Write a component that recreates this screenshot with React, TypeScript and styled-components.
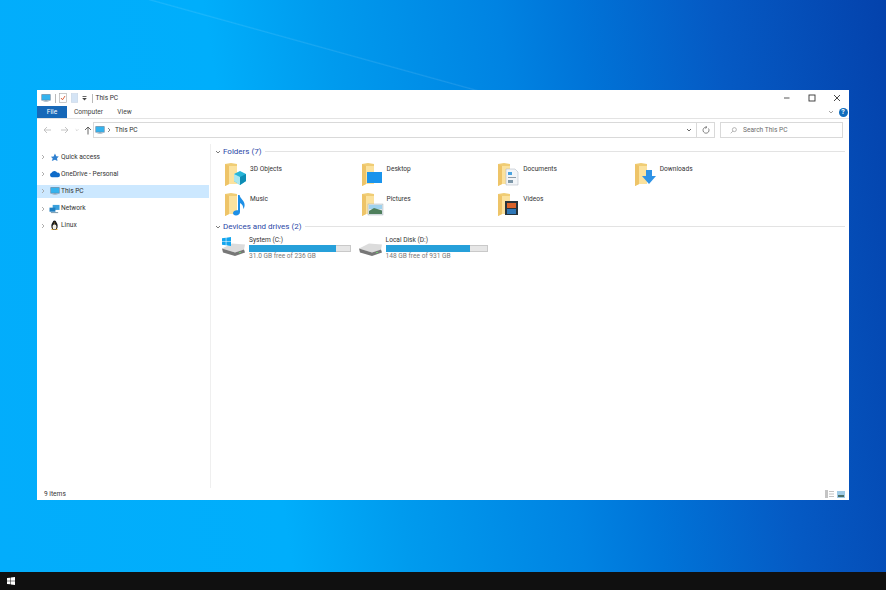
import React from 'react';
import styled, { createGlobalStyle } from 'styled-components';

const GlobalStyle = createGlobalStyle`
  html, body { margin: 0; padding: 0; width: 886px; height: 590px; overflow: hidden; }
  body { font-family: Roboto, "Open Sans", "Liberation Sans", sans-serif; }
  * { box-sizing: border-box; }
`;

const Screen = styled.div`
  width: 886px;
  height: 590px;
  display: flex;
  flex-direction: column;
`;

const Desktop = styled.div`
  height: 572px;
  padding: 90px 37px 72px;
  background:
    linear-gradient(15.5deg, rgba(255, 255, 255, 0) 57.1%, rgba(255, 255, 255, 0.1) 57.6%, rgba(255, 255, 255, 0) 58.2%) 0 0 / 500px 90px no-repeat,
    linear-gradient(81deg, #03adfb 0%, #00aefb 30%, #009bee 42%, #0083e2 60%, #0074d8 68%, #055ac4 82%, #0442ac 100%);
`;

const Window = styled.div`
  width: 812px;
  height: 410px;
  background: #fff;
  display: flex;
  flex-direction: column;
  color: #333;
  font-size: 6.6px;
  line-height: 1;
`;

const TitleBar = styled.div`
  height: 16px;
  display: flex;
  align-items: center;
  padding-left: 4px;
  flex: none;
`;

const QuickBar = styled.div`
  display: flex;
  align-items: center;
  gap: 3.5px;
`;

const Sep = styled.span`
  width: 1px;
  height: 9px;
  background: #b9b9b9;
`;

const TitleText = styled.span`
  margin-left: 3px;
  flex: 1;
`;

const WinButtons = styled.div`
  display: flex;
  align-items: center;
  gap: 15px;
  padding-right: 7px;
`;

const WinBtn = styled.span`
  width: 10px;
  height: 10px;
  display: flex;
  align-items: center;
  justify-content: center;
`;

const RibbonTabs = styled.div`
  height: 13px;
  display: flex;
  align-items: stretch;
  flex: none;
  border-bottom: 1px solid #e3e3e3;
  padding-right: 1.5px;
`;

const FileTab = styled.span`
  width: 30px;
  background: #1668b8;
  color: #fff;
  display: flex;
  align-items: center;
  justify-content: center;
`;

const Tab = styled.span<{ $w: number }>`
  width: ${(p) => p.$w}px;
  display: flex;
  align-items: center;
  justify-content: center;
  color: #444;
`;

const RibbonRight = styled.div`
  margin-left: auto;
  display: flex;
  align-items: center;
  gap: 4.5px;
`;

const Help = styled.span`
  width: 9px;
  height: 9px;
  border-radius: 50%;
  background: #0f6cbd;
  color: #fff;
  font-size: 7px;
  font-weight: 700;
  display: flex;
  align-items: center;
  justify-content: center;
`;

const AddressRow = styled.div`
  height: 21px;
  flex: none;
  display: flex;
  align-items: center;
  padding: 2px 6px 1px 5px;
`;

const NavButtons = styled.div`
  width: 51px;
  padding-left: 1px;
  display: flex;
  align-items: center;
  gap: 5px;
  flex: none;

  svg:nth-child(2) {
    margin: 0 1px 0 2.5px;
  }
`;

const AddressBox = styled.div`
  width: 604px;
  height: 16px;
  border: 1px solid #d9d9d9;
  display: flex;
  align-items: center;
  padding-left: 1px;
  gap: 1px;
`;

const Crumb = styled.span`
  margin-left: 2px;
  flex: 1;
`;

const DropArrow = styled.span`
  display: flex;
  margin-right: 4px;
`;

const RefreshBox = styled.div`
  width: 18px;
  height: 16px;
  border: 1px solid #d9d9d9;
  border-left: none;
  display: flex;
  align-items: center;
  justify-content: center;
  margin-right: 5px;
`;

const SearchBox = styled.div`
  width: 123px;
  height: 16px;
  border: 1px solid #d9d9d9;
  display: flex;
  align-items: center;
  gap: 6px;
  padding-left: 9px;
  color: #6d6d6d;
`;

const Body = styled.div`
  flex: 1;
  display: flex;
  min-height: 0;
  padding-top: 4px;
`;

const Sidebar = styled.nav`
  width: 174px;
  flex: none;
  border-right: 1px solid #efefef;
  padding-top: 6.5px;
  display: flex;
  flex-direction: column;
  gap: 4.2px;
`;

const NavRow = styled.div<{ $active?: boolean }>`
  height: 13px;
  width: 172px;
  display: flex;
  align-items: center;
  padding-left: 3px;
  background: ${(p) => (p.$active ? '#cce8ff' : 'transparent')};
`;

const NavIcon = styled.span`
  width: 11px;
  height: 11px;
  margin: 0 1px 0 3px;
  display: flex;
  align-items: center;
  justify-content: center;
`;

const Content = styled.main`
  flex: 1;
  padding: 2px 4px 0 4px;
`;

const GroupHeader = styled.div`
  display: flex;
  align-items: center;
  height: 11px;
  color: #2a47a6;
  font-size: 8px;
  gap: 2px;
`;

const GroupLine = styled.span`
  flex: 1;
  height: 1px;
  background: #e3e3e3;
  margin-left: 2px;
`;

const FolderGrid = styled.div`
  display: grid;
  grid-template-columns: repeat(4, 136.6px);
  grid-auto-rows: 30px;
  padding: 5px 0 0 8px;
  margin-bottom: -1px;
`;

const FolderItem = styled.div`
  display: flex;
  align-items: flex-start;
  gap: 3px;
`;

const FolderName = styled.span`
  padding-top: 3.5px;
`;

const DriveGrid = styled.div`
  display: grid;
  grid-template-columns: repeat(2, 136.6px);
  padding: 5px 0 0 6px;
`;

const DriveItem = styled.div`
  display: flex;
  align-items: flex-start;
`;

const DriveInfo = styled.div`
  margin-left: 3px;
  width: 102px;
  display: flex;
  flex-direction: column;
  gap: 1.2px;
`;

const Bar = styled.div`
  height: 7px;
  background: #e6e6e6;
  border: 1px solid #c9c9c9;
`;

const BarFill = styled.div`
  height: 100%;
  background: #26a0da;
  margin: -1px 0 0 -1px;
  padding-bottom: 2px;
  box-sizing: content-box;
`;

const DriveSize = styled.span`
  color: #777;
`;

const StatusBar = styled.div`
  height: 12px;
  flex: none;
  display: flex;
  align-items: center;
  justify-content: space-between;
  padding: 0 4px 0 7px;
  color: #333;
`;

const ViewIcons = styled.div`
  display: flex;
  gap: 3px;
  align-items: center;
`;

const Taskbar = styled.div`
  height: 18px;
  flex: none;
  background: #101010;
  display: flex;
  align-items: center;
  padding-left: 7px;
`;

const Chevron = ({ color = '#a6a6a6' }: { color?: string }) => (
  <svg width="6" height="6" viewBox="0 0 6 6" fill="none" stroke={color} strokeWidth="0.9"><path d="M2 1l2 2-2 2" /></svg>
);

const ChevronDown = ({ color = '#6d6d6d' }: { color?: string }) => (
  <svg width="6" height="6" viewBox="0 0 6 6" fill="none" stroke={color} strokeWidth="0.9"><path d="M1 2l2 2 2-2" /></svg>
);

const Monitor = ({ size = 10 }: { size?: number }) => (
  <svg width={size} height={size} viewBox="0 0 12 12">
    <rect x="0.5" y="1.5" width="11" height="7.5" fill="#5a7f9c" />
    <rect x="1.2" y="2.2" width="9.6" height="6" fill="#35b3ee" />
    <rect x="4.5" y="9" width="3" height="1" fill="#7f98aa" />
    <rect x="3" y="10" width="6" height="0.8" fill="#a9bac6" />
  </svg>
);

const WinLogo = ({ size, color }: { size: number; color: string }) => (
  <svg width={size} height={size} viewBox="0 0 10 10" fill={color}>
    <path d="M0 1.4l4.2-.6v3.9H0zM4.8.7L10 0v4.7H4.8zM0 5.3h4.2v3.9L0 8.6zM4.8 5.3H10V10l-5.2-.7z" />
  </svg>
);

// overlay drawn over the folder differs per library folder
const overlays: Record<string, React.ReactNode> = {
  '3D Objects': (
    <>
      <path d="M11 12l6-3 6 3v7l-6 4-6-4z" fill="#27b5d8" />
      <path d="M11 12l6 3v8l-6-4z" fill="#a9e6ef" />
      <path d="M17 15l6-3v7l-6 4z" fill="#0e8db5" />
    </>
  ),
  Desktop: <rect x="7" y="10" width="15" height="11" fill="#1a94ec" />,
  Documents: (
    <>
      <path d="M10 7h9l3 3v13H10z" fill="#f2f5f8" stroke="#a8b3bd" strokeWidth="0.5" />
      <rect x="12" y="10" width="4" height="3" fill="#4aa3e0" />
      <rect x="12" y="15" width="8" height="1" fill="#8f9ca8" />
      <rect x="12" y="18" width="5" height="3" fill="#7d97a8" />
    </>
  ),
  Downloads: <path d="M13 8h6v6h4l-7 8-7-8h4z" fill="#2f93e6" />,
  Music: (
    <path d="M15 3h1.6c.4 4 5 5 5 10 0 1.500-.5 3-1.300 4 .2-3-1.300-5-3.300-6v9c0 2-2 3.500-4 3.500s-3-1-3-2.400c0-2 2.500-3.300 5-2.800z" fill="#1d8fe6" />
  ),
  Pictures: (
    <>
      <rect x="8" y="12" width="15" height="11" fill="#dfe6ea" stroke="#9aa7af" strokeWidth="0.4" />
      <rect x="9" y="13" width="13" height="4" fill="#9fd2ee" />
      <path d="M9 19l5-3 8 2.500V22H9z" fill="#4e7f5c" />
    </>
  ),
  Videos: (
    <>
      <rect x="9" y="9" width="13" height="14" fill="#26333c" />
      <rect x="11" y="11" width="9" height="5" fill="#d9622b" />
      <rect x="11" y="17" width="9" height="5" fill="#2e77b8" />
    </>
  ),
};

const FolderIcon = ({ name }: { name: string }) => (
  <svg width="24" height="24" viewBox="0 0 24 24">
    <path d="M2 2l6-1 6 1v20H6l-4 2z" fill="#f0cd75" />
    <path d="M2 2l4 2v18l-4 2z" fill="#eec468" />
    <path d="M6 4h8v18H6z" fill="#fbe29e" />
    {overlays[name]}
  </svg>
);

const DriveIcon = ({ system }: { system?: boolean }) => (
  <svg width="25" height="20" viewBox="0 0 25 20">
    <g transform="translate(1 6.5)">
      <path d="M0 5l10-5 13 1-1 5-9 3z" fill="#dcdcdc" />
      <path d="M0 5l13 4 9-3 1 3-10 3.500L1 9z" fill="#777" />
      <rect x="17" y="8.500" width="2" height="0.800" fill="#6fdc6f" />
    </g>
    {system && <g transform="translate(1 0)"><WinLogo size={9} color="#12a5ee" /></g>}
  </svg>
);

const folders = ['3D Objects', 'Desktop', 'Documents', 'Downloads', 'Music', 'Pictures', 'Videos'];

const drives = [
  { name: 'System (C:)', size: '31.0 GB free of 236 GB', used: 86.500, system: true },
  { name: 'Local Disk (D:)', size: '148 GB free of 931 GB', used: 84 },
];

const navItems: { label: string; icon: React.ReactNode; active?: boolean }[] = [
  {
    label: 'Quick access',
    icon: (
      <svg width="9" height="9" viewBox="0 0 10 10"><path d="M5.500.5l1.500 3 2.800.4-2 2 .5 3.100-2.800-1.500L2 9l1-3-2-1.800L4 3.900z" fill="#2f80d0" /></svg>
    ),
  },
  {
    label: 'OneDrive - Personal',
    icon: (
      <svg width="11" height="8" viewBox="0 0 12 8"><path d="M3 7.500A2.500 2.500 0 0 1 2.800 2.700 3.500 3.500 0 0 1 9 2.500 2.500 2.500 0 0 1 9.800 7.500z" fill="#0f6cc9" /></svg>
    ),
  },
  { label: 'This PC', icon: <Monitor />, active: true },
  {
    label: 'Network',
    icon: (
      <svg width="11" height="10" viewBox="0 0 12 11">
        <rect x="4" y="1" width="7.500" height="5.500" fill="#3aa0dc" />
        <rect x="0.500" y="4" width="6.500" height="4.500" fill="#1f7fc0" />
        <rect x="2" y="9" width="8" height="1" fill="#6d8fa5" />
      </svg>
    ),
  },
  {
    label: 'Linux',
    icon: (
      <svg width="9" height="11" viewBox="0 0 10 12">
        <ellipse cx="5" cy="6.500" rx="3.500" ry="4.500" fill="#1d1d1d" />
        <ellipse cx="5" cy="7.500" rx="2.200" ry="3" fill="#f4f0e4" />
        <circle cx="5" cy="2.500" r="2" fill="#1d1d1d" />
        <path d="M1 11l2-1.500 1 1.500zM9 11L7 9.500 6 11z" fill="#e8a51c" />
        <path d="M4.200 3h1.600L5 4z" fill="#e8a51c" />
      </svg>
    ),
  },
];

export default function App() {
  return (
    <Screen>
      <GlobalStyle />
      <Desktop>
        <Window>
          <TitleBar>
            <QuickBar>
              <Monitor />
              <Sep />
              <svg width="8" height="10" viewBox="0 0 8 10">
                <rect x="0.500" y="0.500" width="7" height="9" fill="#fff" stroke="#a7a7a7" strokeWidth="0.6" />
                <path d="M2 5l1.500 1.800L6 3" stroke="#d8552c" strokeWidth="0.9" fill="none" />
              </svg>
              <svg width="7" height="10" viewBox="0 0 7 10"><rect x="0.250" y="0.500" width="6.500" height="9" fill="#d5e4f5" stroke="#c3d2e2" strokeWidth="0.5" /></svg>
              <svg width="7" height="7" viewBox="0 0 7 7">
                <rect x="1.500" y="1" width="4" height="0.800" fill="#444" />
                <path d="M1.200 3h4.600L3.500 5.500z" fill="#444" />
              </svg>
              <Sep />
            </QuickBar>
            <TitleText>This PC</TitleText>
            <WinButtons>
              <WinBtn>
                <svg width="8" height="8" viewBox="0 0 8 8"><path d="M1 4h5.500" stroke="#444" strokeWidth="0.9" /></svg>
              </WinBtn>
              <WinBtn>
                <svg width="8" height="8" viewBox="0 0 8 8"><rect x="1" y="1" width="6" height="6" fill="none" stroke="#333" strokeWidth="0.9" /></svg>
              </WinBtn>
              <WinBtn>
                <svg width="8" height="8" viewBox="0 0 8 8"><path d="M1 1l6 6M7 1L1 7" stroke="#333" strokeWidth="0.9" /></svg>
              </WinBtn>
            </WinButtons>
          </TitleBar>

          <RibbonTabs>
            <FileTab>File</FileTab>
            <Tab $w={43}>Computer</Tab>
            <Tab $w={29}>View</Tab>
            <RibbonRight>
              <ChevronDown color="#9a9a9a" />
              <Help>?</Help>
            </RibbonRight>
          </RibbonTabs>

          <AddressRow>
            <NavButtons>
              <svg width="9" height="8" viewBox="0 0 9 8" fill="none" stroke="#bdbdbd" strokeWidth="0.9"><path d="M8 4H1M4 1L1 4l3 3" /></svg>
              <svg width="9" height="8" viewBox="0 0 9 8" fill="none" stroke="#bdbdbd" strokeWidth="0.9"><path d="M1 4h7M5 1l3 3-3 3" /></svg>
              <svg width="4" height="4" viewBox="0 0 6 6" fill="none" stroke="#bdbdbd" strokeWidth="1"><path d="M1 2l2 2 2-2" /></svg>
              <svg width="8" height="9" viewBox="0 0 8 9" fill="none" stroke="#555" strokeWidth="0.9"><path d="M4 8.500V1M1 4l3-3 3 3" /></svg>
            </NavButtons>
            <AddressBox>
              <Monitor />
              <Chevron color="#777" />
              <Crumb>This PC</Crumb>
              <DropArrow><ChevronDown color="#555" /></DropArrow>
            </AddressBox>
            <RefreshBox>
              <svg width="8" height="8" viewBox="0 0 8 8" fill="none" stroke="#666" strokeWidth="0.8">
                <path d="M6.500 2.500A3 3 0 1 1 4 1.200" />
                <path d="M3.500 0L5 1.200 3.500 2.500" />
              </svg>
            </RefreshBox>
            <SearchBox>
              <svg width="7" height="7" viewBox="0 0 8 8" fill="none" stroke="#8a8a8a" strokeWidth="0.7">
                <circle cx="5" cy="3" r="2.300" />
                <path d="M3.300 4.700L0.800 7.200" />
              </svg>
              Search This PC
            </SearchBox>
          </AddressRow>

          <Body>
            <Sidebar>
              {navItems.map((item) => (
                <NavRow key={item.label} $active={item.active}>
                  <Chevron />
                  <NavIcon>{item.icon}</NavIcon>
                  {item.label}
                </NavRow>
              ))}
            </Sidebar>
            <Content>
              <GroupHeader>
                <ChevronDown />
                Folders (7)
                <GroupLine />
              </GroupHeader>
              <FolderGrid>
                {folders.map((f) => (
                  <FolderItem key={f}>
                    <FolderIcon name={f} />
                    <FolderName>{f}</FolderName>
                  </FolderItem>
                ))}
              </FolderGrid>
              <GroupHeader>
                <ChevronDown />
                Devices and drives (2)
                <GroupLine />
              </GroupHeader>
              <DriveGrid>
                {drives.map((d) => (
                  <DriveItem key={d.name}>
                    <DriveIcon system={d.system} />
                    <DriveInfo>
                      <span>{d.name}</span>
                      <Bar>
                        <BarFill style={{ width: `${d.used}%` }} />
                      </Bar>
                      <DriveSize>{d.size}</DriveSize>
                    </DriveInfo>
                  </DriveItem>
                ))}
              </DriveGrid>
            </Content>
          </Body>

          <StatusBar>
            9 items
            <ViewIcons>
              <svg width="9" height="8" viewBox="0 0 9 8" fill="#c4c4c4">
                <rect x="0" y="0" width="3" height="8" />
                <rect x="4" y="1" width="5" height="1" />
                <rect x="4" y="3.500" width="5" height="1" />
                <rect x="4" y="6" width="5" height="1" />
              </svg>
              <svg width="8" height="7" viewBox="0 0 8 7">
                <rect width="8" height="7" fill="#9fcbe6" />
                <rect x="1" y="4" width="6" height="2" fill="#4b6f66" />
              </svg>
            </ViewIcons>
          </StatusBar>
        </Window>
      </Desktop>
      <Taskbar>
        <WinLogo size={8} color="#fff" />
      </Taskbar>
    </Screen>
  );
}
